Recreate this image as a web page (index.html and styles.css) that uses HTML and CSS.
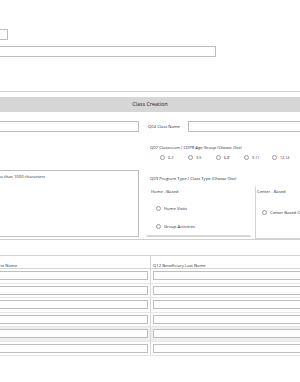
FILE: index.html
```html
<!DOCTYPE html>
<html lang="en">
<head>
  <meta charset="UTF-8">
  <meta name="viewport" content="width=device-width, initial-scale=1.0">
  <title>Class Creation</title>
  <link rel="stylesheet" href="styles.css">
</head>
<body>
  <div class="page">
    <div class="top">
      <div class="box mini"></div>
      <div class="box wide"></div>
    </div>

    <div class="section">
      <div class="section-head">Class Creation</div>

      <div class="cols">
        <div class="box field-left"></div>
        <div class="row-q04">
          <span class="label">Q04 Class Name</span>
          <div class="box field-right"></div>
        </div>

        <div></div>
        <div class="q07">
          <div class="label">Q07 Classroom / CDPR Age Group <em>(Choose One)</em></div>
          <div class="radios">
            <span class="opt"><span class="radio"></span>0-2</span>
            <span class="opt"><span class="radio"></span>3-5</span>
            <span class="opt"><span class="radio"></span>6-8</span>
            <span class="opt"><span class="radio"></span>9-11</span>
            <span class="opt"><span class="radio"></span>12-14</span>
          </div>
        </div>

        <div class="box notes">
          <span class="notes-text">Please limit to less than 1000 characters</span>
        </div>
        <div class="q09">
          <div class="label">Q09 Program Type / Class Type <em>(Choose One)</em></div>
          <div class="types">
            <div class="type home">
              <div class="type-title">Home - Based</div>
              <div class="opt-line"><span class="radio"></span>Home Visits</div>
              <div class="opt-line"><span class="radio"></span>Group Activities</div>
            </div>
            <div class="type center">
              <div class="type-title">Center - Based</div>
              <div class="opt-line"><span class="radio"></span>Center Based Classroom</div>
            </div>
          </div>
        </div>
      </div>
    </div>

    <div class="table">
      <div class="th">Q11 Beneficiary First Name</div>
      <div class="th">Q12 Beneficiary Last Name</div>
      <div class="td"><div class="box cell"></div></div>
      <div class="td"><div class="box cell"></div></div>
      <div class="td"><div class="box cell"></div></div>
      <div class="td"><div class="box cell"></div></div>
      <div class="td"><div class="box cell"></div></div>
      <div class="td"><div class="box cell"></div></div>
      <div class="td"><div class="box cell"></div></div>
      <div class="td"><div class="box cell"></div></div>
      <div class="td shade"><div class="box cell"></div></div>
      <div class="td shade"><div class="box cell"></div></div>
      <div class="td"><div class="box cell"></div></div>
      <div class="td"><div class="box cell"></div></div>
    </div>
  </div>
</body>
</html>
```

FILE: styles.css
```css
body {
  margin: 0;
  background: #ffffff;
  font-family: 'Open Sans', 'Liberation Sans', sans-serif;
  font-size: 4.2px;
  color: #2e2e2e;
  overflow: hidden;
}

.page {
  width: 380px;
  margin-left: -40px;
}

.box {
  box-sizing: border-box;
  border: 1px solid #bdbdbd;
  background: #ffffff;
}

.top {
  padding-top: 29px;
  padding-bottom: 34px;
  border-bottom: 1px solid #cfcfcf;
}

.mini {
  width: 48px;
  height: 11px;
}

.wide {
  width: 256px;
  height: 11px;
  margin-top: 6px;
}

.section {
  padding-top: 5px;
  border-bottom: 1px solid #cfcfcf;
}

.section-head {
  height: 15px;
  line-height: 15px;
  background: #d6d6d6;
  text-align: center;
  font-size: 5.4px;
  color: #222222;
}

.cols {
  display: grid;
  grid-template-columns: 179px 1fr;
  column-gap: 9px;
  padding-top: 9px;
}

.field-left {
  height: 11px;
}

.row-q04 {
  display: flex;
  align-items: center;
  white-space: nowrap;
}

.row-q04 .label {
  width: 40px;
}

.field-right {
  flex: 1;
  height: 11px;
}

.label {
  white-space: nowrap;
}

.label em {
  font-style: italic;
}

.q07 {
  padding-top: 13px;
  padding-left: 2px;
}

.radios {
  display: flex;
  padding-left: 10px;
  margin-top: 5px;
}

.opt {
  display: flex;
  align-items: center;
  width: 28px;
  font-size: 3.6px;
}

.radio {
  box-sizing: border-box;
  width: 5px;
  height: 5px;
  border: 1px solid #9a9a9a;
  border-radius: 50%;
  margin-right: 3px;
  flex-shrink: 0;
}

.notes {
  grid-column: 1;
  height: 67px;
  margin-top: 10px;
  padding: 3px 2px;
  overflow: hidden;
  white-space: nowrap;
}

.notes-text {
  display: block;
  margin-left: 4px;
}

.q09 {
  padding-top: 16px;
  padding-left: 2px;
}

.types {
  display: flex;
  gap: 4px;
  margin-top: 5px;
}

.type {
  box-sizing: border-box;
  border: 1px solid #d3d3d3;
  height: 51px;
  padding: 2px 0 0 2px;
}

.home {
  width: 105px;
  margin-left: -4px;
  border-top-color: transparent;
  border-left-color: transparent;
  border-right-color: transparent;
  border-bottom: 2px solid #d6d6d6;
  padding-left: 4px;
}

.center {
  flex: 1;
  height: 53px;
  border-top-color: transparent;
  padding-left: 1px;
}

.type-title {
  margin-bottom: 11px;
}

.center .type-title {
  margin-bottom: 15px;
}

.opt-line {
  display: flex;
  align-items: center;
  height: 6px;
  margin-bottom: 12px;
  padding-left: 5px;
  white-space: nowrap;
}

.table {
  display: grid;
  grid-template-columns: 191px 1fr;
  margin-top: 15px;
}

.th {
  height: 14px;
  padding-top: 7px;
  box-sizing: border-box;
  border-top: 1px solid #d3d3d3;
  border-bottom: 1px solid #d3d3d3;
  padding-left: 2px;
  white-space: nowrap;
  overflow: hidden;
}

.th:first-child {
  border-right: 1px solid #d3d3d3;
  padding-left: 0;
  text-indent: 4px;
}

.td {
  height: 14.5px;
  box-sizing: border-box;
  padding: 2px 2px 0 2px;
  border-bottom: 1px solid #e6e6e6;
}

.td:nth-child(odd) {
  border-right: 1px solid #d8d8d8;
}

.shade {
  background: #efefef;
}

.cell {
  height: 9px;
}
```
